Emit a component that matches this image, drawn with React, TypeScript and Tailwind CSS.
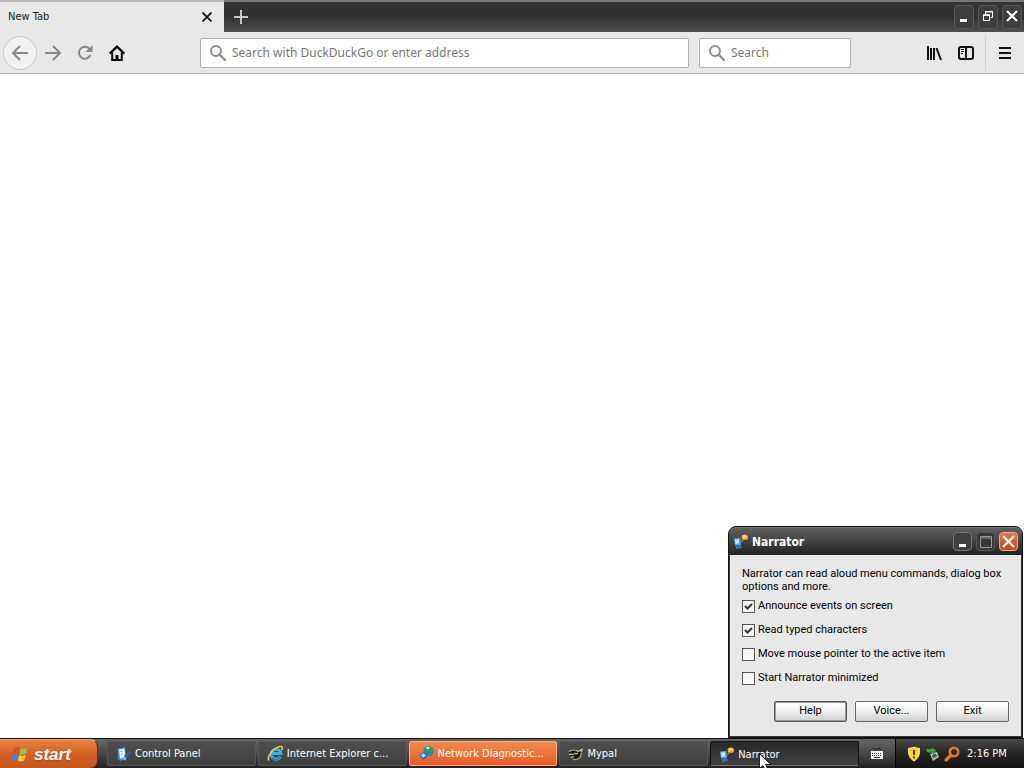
import type { ReactNode } from 'react';

function SearchIcon() {
  return (
    <svg width="18" height="18" viewBox="0 0 18 18" fill="none" stroke="#8f8f8f" className="shrink-0">
      <circle cx="7" cy="7" r="5" strokeWidth="2" />
      <path d="M10.5 10.5 16 16" strokeWidth="2.4" strokeLinecap="round" />
    </svg>
  );
}

function NarratorIcon() {
  return (
    <svg width="16" height="16" viewBox="0 0 16 16" className="shrink-0">
      <path d="M1 4.5 7.5 4l.5 7-6 .5z" fill="#5aa7e8" />
      <path d="M2 5.5 6 5.2v4l-3.500 .8z" fill="#c5e8ff" />
      <path d="M2.5 12 8 11.500l1 2.500-6 1z" fill="#3976b5" />
      <path d="M8 9 9 5.500l2 .2z" fill="#d58d2c" />
      <ellipse cx="11.800" cy="3.200" rx="3.200" ry="2.600" fill="#f4b640" />
      <ellipse cx="11.200" cy="2.500" rx="1.600" ry="1" fill="#ffe08a" />
    </svg>
  );
}

function ControlPanelIcon() {
  return (
    <svg width="16" height="16" viewBox="0 0 16 16" className="shrink-0">
      <path d="M1.500 2.500 9 1l1.500 12L4 15 2 13z" fill="#4f87d6" />
      <path d="M3 3.500 8.500 2.500l.8 9-5.300 1z" fill="#e8f5ff" />
      <path d="m4.500 5.500 2-.4M5 8l1.500-.3" stroke="#6daa4d" />
      <path d="m8.500 9 1.500 1.500L14.500 6" fill="none" stroke="#3567b8" strokeWidth="2" />
      <path d="m6 12 4 1.500" stroke="#79b4f3" strokeWidth="2" />
    </svg>
  );
}

function ExplorerIcon() {
  return (
    <svg width="17" height="17" viewBox="0 0 17 17" fill="none" className="shrink-0">
      <path d="M13.500 11.500a5 5 0 1 1 .5-3H5" stroke="#3bb0ee" strokeWidth="3" />
      <path d="M13 12a4.800 4.800 0 0 1-8 1" stroke="#1f7ccc" strokeWidth="1.500" />
      <path d="M2 15.500C-1 12 7 2.500 13 1.500c2.500-.4 2.800 1.500 1.500 3.500" stroke="#f4c742" strokeWidth="1.600" />
    </svg>
  );
}

function NetworkIcon() {
  return (
    <svg width="17" height="17" viewBox="0 0 17 17" className="shrink-0">
      <circle cx="10.500" cy="6" r="5.200" fill="#2589bc" />
      <path d="M7 3c3-3 6.500-1.500 8 1.500L13 8l-3-2-2 1z" fill="#3a9e58" />
      <path d="M8 2.500c1.500-1.200 3-1 4 0L9.500 4.500z" fill="#d5f5e6" />
      <path d="m1 10 5-3 4 4-5 4z" fill="#2868c8" />
      <path d="m2.500 10 3.200-1.800L8 10.700l-3 2.200z" fill="#a5dbff" />
    </svg>
  );
}

function MypalIcon() {
  return (
    <svg width="16" height="16" viewBox="0 0 16 16" fill="none" className="shrink-0">
      <path d="M1 6c3-3 7-3 9-1l4-1-1 5c0 4-5 6-8 4" fill="#171512" />
      <path d="M1 5.500c3-2 7-2 9 0l4-2-1 3M1 8.500c2-.5 4-.5 5 0m-3 3 3-1" stroke="#d8cda1" strokeWidth="1.200" />
      <path d="M13 7c1 4-4 8-8 6m1-6 2 1 2-1" stroke="#a99658" strokeWidth="1.500" />
    </svg>
  );
}

function WindowsFlag() {
  return (
    <svg width="20" height="18" viewBox="0 0 20 18" className="shrink-0">
      <path d="M4 3.200c2-1.500 4-1.500 6-.3L8.500 8.700c-2-1.200-4-1-6 .3z" fill="#d94e2b" />
      <path d="M11 3.300c2 1.200 4 1 6.500-.3L16 8.700c-2.500 1.300-4.500 1.500-6.500.3z" fill="#91c83e" />
      <path d="M2.200 10c2-1.300 4-1.400 6-.3L6.700 15.500c-2-1.200-4-1-6 .3z" fill="#4d80e6" />
      <path d="M9.200 10.100c2 1.200 4 1 6.500-.3l-1.500 5.700c-2.500 1.300-4.500 1.500-6.500.3z" fill="#f8cf41" />
    </svg>
  );
}

function CaptionButton({ label, className, children }: { label: string; className: string; children: ReactNode }) {
  return (
    <button aria-label={label} className={`flex shrink-0 items-center justify-center rounded-sm border ${className}`}>
      {children}
    </button>
  );
}

function TabStrip() {
  return (
    <div className="flex h-8 items-stretch border-t-2 border-[#777] bg-linear-to-b from-[#353535] via-[#303030] to-[#505050]">
      <div className="-mt-0.5 flex w-56 items-center justify-between border-t-2 border-[#b5b5b5] bg-[#e8e8e8] pr-2.5 pl-2">
        <span className="pt-px text-[11px] text-[#222]">New Tab</span>
        <button aria-label="Close tab" className="p-0.5">
          <svg width="10" height="10" viewBox="0 0 10 10" stroke="#111" strokeWidth="1.8">
            <path d="m.5.5 9 9m0-9-9 9" />
          </svg>
        </button>
      </div>
      <button aria-label="New tab" className="flex w-[34px] items-center justify-center">
        <svg width="14" height="14" viewBox="0 0 14 14" stroke="#c8c8c8" strokeWidth="2">
          <path d="M7 0v14M0 7h14" />
        </svg>
      </button>
      <div className="ml-auto flex items-center gap-1 pr-0.5">
        <CaptionButton label="Minimize" className="h-6 w-5 border-[#5a5a5a] bg-[#3e3e3e]">
          <svg width="14" height="14" viewBox="0 0 14 14"><path d="M3 9h7v3H3z" fill="#fff" /></svg>
        </CaptionButton>
        <CaptionButton label="Restore" className="h-6 w-5 border-[#5a5a5a] bg-[#3e3e3e]">
          <svg width="12" height="14" viewBox="0 0 12 14" fill="none" stroke="#fff">
            <path d="M3.500 4V1.500h7v6H8.500M3 2h8" />
            <path d="M1.500 4.500h6v6h-6zM1 5.500h7" />
          </svg>
        </CaptionButton>
        <CaptionButton label="Close" className="h-6 w-5 border-[#5a5a5a] bg-[#3e3e3e]">
          <svg width="12" height="14" viewBox="0 0 12 14" stroke="#fff" strokeWidth="2.2"><path d="m1 1 10 10M11 1 1 11" /></svg>
        </CaptionButton>
      </div>
    </div>
  );
}

function NavBar() {
  return (
    <div className="flex h-[42px] items-center border-b border-[#b4b4b4] bg-[#e8e8e8] pr-[3px] pl-[3px]">
      <button aria-label="Back" className="flex size-[34px] items-center justify-center rounded-full border border-[#c6c6c6] bg-[#f1f1f1]">
        <svg width="18" height="16" viewBox="0 0 18 16" fill="none" stroke="#888" strokeWidth="2"><path d="M17 8H2m7-7L2 8l7 7" /></svg>
      </button>
      <button aria-label="Forward" className="flex w-8 items-center justify-center">
        <svg width="18" height="16" viewBox="0 0 18 16" fill="none" stroke="#888" strokeWidth="2"><path d="M1 8h15M9 1l7 7-7 7" /></svg>
      </button>
      <button aria-label="Reload" className="flex w-8 items-center justify-center">
        <svg width="16" height="16" viewBox="0 0 16 16" fill="none" stroke="#888" strokeWidth="2">
          <path d="M13 4.500A6 6 0 1 0 13.500 10" />
          <path d="M15.500 0v7h-7z" fill="#888" stroke="none" />
        </svg>
      </button>
      <button aria-label="Home" className="flex w-8 items-center justify-center">
        <svg width="16" height="16" viewBox="0 0 16 16" fill="none" stroke="#080808" strokeWidth="2">
          <path d="m.7 8.600 7.300-7 7.300 7" strokeWidth="2.200" />
          <path d="M3.200 7.500V15h9.600V7.500" />
          <path d="M6.500 15v-5h3v5z" fill="#080808" stroke="none" />
        </svg>
      </button>
      <label className="ml-[67px] flex h-[30px] flex-1 items-center gap-[5px] rounded-xs border border-[#b2b2b2] bg-white px-2">
        <SearchIcon />
        <input aria-label="Address" placeholder="Search with DuckDuckGo or enter address" className="min-w-0 flex-1 bg-transparent font-['Noto_Sans',sans-serif] text-[12px] outline-none placeholder:text-[#777]" />
      </label>
      <label className="mr-[67px] ml-2.5 flex h-[30px] w-[152px] items-center gap-[5px] rounded-xs border border-[#b2b2b2] bg-white px-2">
        <SearchIcon />
        <input aria-label="Search" placeholder="Search" className="min-w-0 flex-1 bg-transparent font-['Noto_Sans',sans-serif] text-[12px] outline-none placeholder:text-[#777]" />
      </label>
      <button aria-label="Library" className="flex w-8 items-center justify-center">
        <svg width="16" height="16" viewBox="0 0 16 16" stroke="#111" strokeWidth="2"><path d="M2 1v14M5 3v12M8 3v12M10.500 3l4.500 12" /></svg>
      </button>
      <button aria-label="Sidebars" className="flex w-8 items-center justify-center">
        <svg width="16" height="14" viewBox="0 0 16 14" fill="none" stroke="#111" strokeWidth="2">
          <rect x="1" y="1" width="14" height="12" rx="2" />
          <path d="M8 1v12" />
          <path d="M3 3.500h3M3 5.500h3M3 7.500h2" strokeWidth="1" />
        </svg>
      </button>
      <div className="ml-[3px] flex h-9 w-9 items-center justify-center border-l border-[#d0d0d0] pl-0.5">
        <button aria-label="Menu">
          <svg width="12" height="12" viewBox="0 0 12 12" stroke="#111" strokeWidth="2"><path d="M0 1h12M0 6h12M0 11h12" /></svg>
        </button>
      </div>
    </div>
  );
}

function CheckOption({ label, checked = false }: { label: string; checked?: boolean }) {
  return (
    <label className="flex h-[13px] items-center gap-[3px]">
      <span className="grid">
        <input type="checkbox" defaultChecked={checked} className="peer col-start-1 row-start-1 size-[13px] appearance-none border border-[#555] bg-[#f6f6f6]" />
        <svg width="13" height="13" viewBox="0 0 13 13" fill="none" stroke="#333" strokeWidth="2" className="pointer-events-none invisible col-start-1 row-start-1 peer-checked:visible">
          <path d="m3 6 2.500 2.500L10 4" />
        </svg>
      </span>
      {label}
    </label>
  );
}

function DialogButton({ label, focused = false }: { label: string; focused?: boolean }) {
  return (
    <button className={`h-[21px] w-[73px] rounded-xs border bg-linear-to-b from-white via-[#f0f0f0] to-[#cfcfcf] ${focused ? 'border-[#555] inset-ring inset-ring-[#999]' : 'border-[#666]'}`}>
      {label}
    </button>
  );
}

function NarratorDialog() {
  return (
    <section aria-label="Narrator" className="absolute right-px bottom-0 w-[295px] rounded-t-lg border border-[#111] bg-[#383838] px-px pb-px font-[Roboto,'Liberation_Sans',sans-serif] text-[11px] text-black">
      <header className="-mx-px flex h-7 items-center rounded-t-[7px] border-t border-[#777] bg-linear-to-b from-[#606060] via-[#424242] to-[#222] pr-1 pl-1">
        <NarratorIcon />
        <h1 className="ml-[3px] flex-1 pt-px font-['DejaVu_Sans_Condensed','DejaVu_Sans',sans-serif] text-[12px] font-bold text-white">Narrator</h1>
        <div className="flex gap-1">
          <CaptionButton label="Minimize" className="size-[19px] border-[#777] bg-[#414141]">
            <svg width="14" height="14" viewBox="0 0 14 14"><path d="M3 9h7v3H3z" fill="#fff" /></svg>
          </CaptionButton>
          <CaptionButton label="Maximize" className="size-[19px] border-[#585858] bg-[#383838]">
            <svg width="12" height="12" viewBox="0 0 12 12" fill="none" stroke="#999"><path d="M.5.5h11v11H.5zM0 2h12" /></svg>
          </CaptionButton>
          <CaptionButton label="Close" className="size-[19px] border-[#f0aa8e] bg-linear-to-b from-[#df7952] to-[#c4441b]">
            <svg width="13" height="13" viewBox="0 0 13 13" stroke="#fff" strokeWidth="2"><path d="m1 1 11 11M12 1 1 12" /></svg>
          </CaptionButton>
        </div>
      </header>
      <div className="bg-[#e8e8e8] px-3 pt-3 pb-[14px]">
        <p className="leading-[13px]">Narrator can read aloud menu commands, dialog box<br />options and more.</p>
        <div className="mt-[7px] flex flex-col gap-[11px]">
          <CheckOption label="Announce events on screen" checked />
          <CheckOption label="Read typed characters" checked />
          <CheckOption label="Move mouse pointer to the active item" />
          <CheckOption label="Start Narrator minimized" />
        </div>
        <div className="mt-4 flex justify-end gap-2">
          <DialogButton label="Help" focused />
          <DialogButton label="Voice..." />
          <DialogButton label="Exit" />
        </div>
      </div>
    </section>
  );
}

function TaskButton({ icon, label, state = 'normal' }: { icon: ReactNode; label: string; state?: 'normal' | 'alert' | 'active' }) {
  const look = {
    normal: 'border-[#565656] bg-linear-to-b from-[#4e4e4e] to-[#414141]',
    alert: 'border-[#ffad79] bg-linear-to-b from-[#f18b4b] to-[#e8582b]',
    active: 'border-[#111] border-b-[#777] bg-linear-to-b from-[#292929] to-[#404040] pt-0.5',
  }[state];
  return (
    <button className={`flex h-[25px] max-w-[149px] min-w-0 flex-1 items-center gap-[3px] rounded-xs border pl-2 text-left text-[11px] text-white ${look}`}>
      {icon}
      <span className="truncate pt-px">{label}</span>
    </button>
  );
}

function Taskbar() {
  return (
    <footer className="flex h-[30px] items-stretch border-t border-[#111] bg-linear-to-b from-[#666] via-[#494949] to-[#202020]">
      <button className="mr-[9px] flex w-[98px] shrink-0 items-center gap-1 rounded-r-lg border-t border-r border-t-[#ffad73] border-r-[#713313] bg-linear-to-b from-[#e88342] via-[#d46022] to-[#c4571c] pl-2.5 text-white">
        <WindowsFlag />
        <span className="font-['Liberation_Sans',Arial,sans-serif] text-[17px] leading-none font-bold italic text-shadow-sm">start</span>
      </button>
      <nav aria-label="Open windows" className="flex min-w-0 flex-1 items-center gap-0.5">
        <TaskButton icon={<ControlPanelIcon />} label="Control Panel" />
        <TaskButton icon={<ExplorerIcon />} label="Internet Explorer c..." />
        <TaskButton icon={<NetworkIcon />} label="Network Diagnostic..." state="alert" />
        <TaskButton icon={<MypalIcon />} label="Mypal" />
        <TaskButton icon={<NarratorIcon />} label="Narrator" state="active" />
      </nav>
      <button aria-label="Language bar" className="flex w-9 shrink-0 items-center justify-center">
        <svg width="14" height="14" viewBox="0 0 14 14" fill="none">
          <path d="M3 1.500h1l1 1h2l1-1h2l1 1" stroke="#111" />
          <rect x="1" y="4" width="12" height="8" fill="#f2f2f2" />
          <path d="M2 6.500h10M2 8.500h10" stroke="#333" strokeDasharray="1 1" />
          <path d="M4 10.500h6" stroke="#333" />
        </svg>
      </button>
      <div className="flex w-[129px] shrink-0 items-center gap-[3px] border-l border-black bg-linear-to-b from-[#4b4b4b] via-[#252525] to-[#151515] pl-2.5 text-[11px] text-white">
        <svg width="16" height="16" viewBox="0 0 16 16" className="shrink-0">
          <path d="M8 1c2 1 4 1.300 5.500 1.300C14 8 12.500 12.500 8 15 3.500 12.500 2 8 2.500 2.300 4 2.300 6 2 8 1z" fill="#f8d328" stroke="#fff1a1" />
          <path d="M8 4v5M8 10.500v2" stroke="#39310b" strokeWidth="1.800" />
        </svg>
        <svg width="16" height="16" viewBox="0 0 16 16" className="shrink-0">
          <path d="m5 8 7-2 2 5-6 4z" fill="#b9c4ba" />
          <path d="m7 9 4-1 1 2-4 2z" fill="#425443" />
          <path d="M1 3h6L6 1l5 3-2 5-2-2-5-1z" fill="#32a53e" />
          <path d="m8 13 5-3" stroke="#899d8d" />
        </svg>
        <svg width="16" height="16" viewBox="0 0 16 16" fill="none" stroke="#e87920" className="shrink-0">
          <circle cx="10" cy="6" r="4.200" strokeWidth="2.600" />
          <path d="m7 9-5 5" strokeWidth="3.200" strokeLinecap="round" />
        </svg>
        <time className="ml-1 pt-px whitespace-nowrap">2:16 PM</time>
      </div>
    </footer>
  );
}

export default function App() {
  return (
    <div className="relative flex h-screen flex-col overflow-hidden bg-white font-['DejaVu_Sans_Condensed','DejaVu_Sans',sans-serif]">
      <div className="relative flex flex-1 flex-col">
        <TabStrip />
        <NavBar />
        <main className="flex-1 bg-white" />
        <NarratorDialog />
      </div>
      <Taskbar />
      <svg width="12" height="19" viewBox="0 0 12 19" className="pointer-events-none absolute right-[253px] -bottom-1">
        <path d="M.5.700v15l3.500-3.200 2.500 5.500 2.500-1-2.400-5.500h5z" fill="#fff" stroke="#222" />
      </svg>
    </div>
  );
}
